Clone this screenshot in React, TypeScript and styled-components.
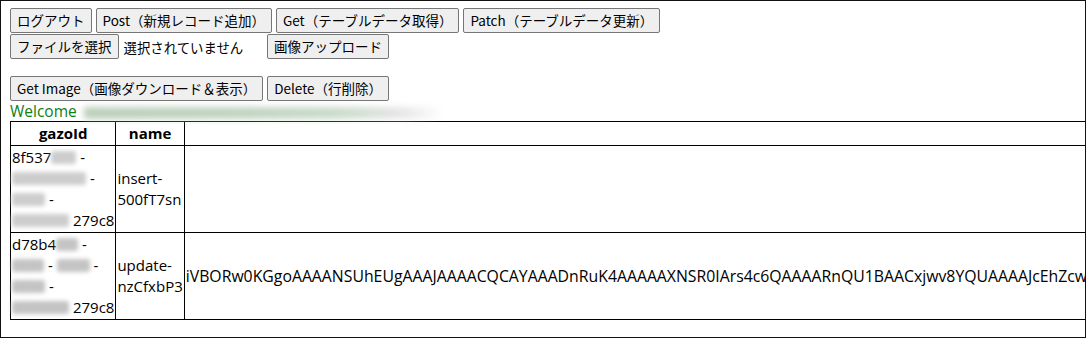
import React from "react";
import styled, {createGlobalStyle} from "styled-components";

const GlobalStyle = createGlobalStyle`
  html, body {
    margin: 0;
    padding: 0;
    background: #fff;
  }
`;

const Frame = styled.div`
  box-sizing: border-box;
  width: 1086px;
  height: 338px;
  border: 1px solid #111;
  padding: 7px 0 0 9px;
  overflow: hidden;
  font-family: "Open Sans", "Noto Sans CJK JP", sans-serif;
  font-size: 15px;
  color: #000;
`;

const Toolbar = styled.div<{ $after?: number }>`
  display: flex;
  align-items: center;
  gap: 4px;
  margin-bottom: ${p => p.$after ?? 1}px;
`;

const Button = styled.button`
  box-sizing: border-box;
  height: 25px;
  padding: 0 6px;
  margin: 0;
  background: #efefef;
  border: 1px solid #767676;
  border-radius: 2px;
  font-family: "Noto Sans CJK JP", "Noto Sans", sans-serif;
  font-size: 13.5px;
  line-height: 23px;
  color: #000;
  white-space: nowrap;
`;

const FileInput = styled.div`
  display: flex;
  align-items: center;
  width: 253px;
`;

const FileStatus = styled.span`
  margin-left: 5px;
  font-family: "Noto Sans CJK JP", sans-serif;
  font-size: 13.4px;
  white-space: nowrap;
`;

const Welcome = styled.div`
  display: flex;
  align-items: center;
  height: 20px;
  line-height: 20px;
  color: #108010;
  font-size: 15.5px;
`;

const WelcomeName = styled.span`
  display: inline-block;
  width: 360px;
  height: 12px;
  margin-left: 7px;
  margin-top: 3px;
  background: linear-gradient(to right, #bccfbc, #c2d4c2 45%, #cadbca 70%, #e6e6e6 88%, rgba(255,255,255,0));
  filter: blur(3px);
`;

const Table = styled.table`
  border-collapse: collapse;
  border: 1px solid #000;
  line-height: 21px;
`;

const Head = styled.th`
  border: 1px solid #000;
  padding: 1px 1px;
  font-weight: 700;
  text-align: center;
`;

const Cell = styled.td`
  border: 1px solid #000;
  padding: 1px 1px;
  vertical-align: middle;
  white-space: normal;
`;

const DataCell = styled(Cell)`
  white-space: nowrap;
  font-size: 15.8px;
`;

const Line = styled.div`
  display: flex;
  align-items: center;
  white-space: pre;
`;

const Blur = styled.span<{ $w: number; $tone?: string }>`
  display: inline-block;
  width: ${p => p.$w}px;
  height: 13px;
  background: ${p => p.$tone ?? "#cdcdcd"};
  border-radius: 3px;
  filter: blur(2px);
`;

const base64 =
    "iVBORw0KGgoAAAANSUhEUgAAAJAAAACQCAYAAADnRuK4AAAAAXNSR0IArs4c6QAAAARnQU1BAACxjwv8YQUAAAAJcEhZcwAADsMAAA7DAcdvqGQAAA";

function GazoId({first}: { first: boolean }) {
    if (first) {
        return (
            <>
                <Line>8f537<Blur $w={25}/> -</Line>
                <Line><Blur $w={74}/> -</Line>
                <Line><Blur $w={33}/> -</Line>
                <Line><Blur $w={57}/> 279c8</Line>
            </>
        );
    }
    return (
        <>
            <Line>d78b4<Blur $w={22} $tone="#c4c4c4"/> -</Line>
            <Line><Blur $w={32} $tone="#c4c4c4"/> - <Blur $w={33} $tone="#c4c4c4"/> -</Line>
            <Line><Blur $w={33} $tone="#c4c4c4"/> -</Line>
            <Line><Blur $w={57} $tone="#c4c4c4"/> 279c8</Line>
        </>
    );
}

export default function App() {
    return (
        <>
            <GlobalStyle/>
            <Frame>
                <Toolbar>
                    <Button>ログアウト</Button>
                    <Button>Post（新規レコード追加）</Button>
                    <Button>Get（テーブルデータ取得）</Button>
                    <Button>Patch（テーブルデータ更新）</Button>
                </Toolbar>
                <Toolbar $after={17}>
                    <FileInput>
                        <Button>ファイルを選択</Button>
                        <FileStatus>選択されていません</FileStatus>
                    </FileInput>
                    <Button>画像アップロード</Button>
                </Toolbar>
                <Toolbar $after={0}>
                    <Button>Get Image（画像ダウンロード＆表示）</Button>
                    <Button>Delete（行削除）</Button>
                </Toolbar>
                <Welcome>Welcome<WelcomeName/></Welcome>
                <Table>
                    <thead>
                    <tr>
                        <Head>gazoId</Head>
                        <Head>name</Head>
                        <Head></Head>
                    </tr>
                    </thead>
                    <tbody>
                    <tr>
                        <Cell><GazoId first/></Cell>
                        <Cell>insert-500fT7sn</Cell>
                        <DataCell></DataCell>
                    </tr>
                    <tr>
                        <Cell><GazoId first={false}/></Cell>
                        <Cell>update-nzCfxbP3</Cell>
                        <DataCell>{base64}</DataCell>
                    </tr>
                    </tbody>
                </Table>
            </Frame>
        </>
    );
}
